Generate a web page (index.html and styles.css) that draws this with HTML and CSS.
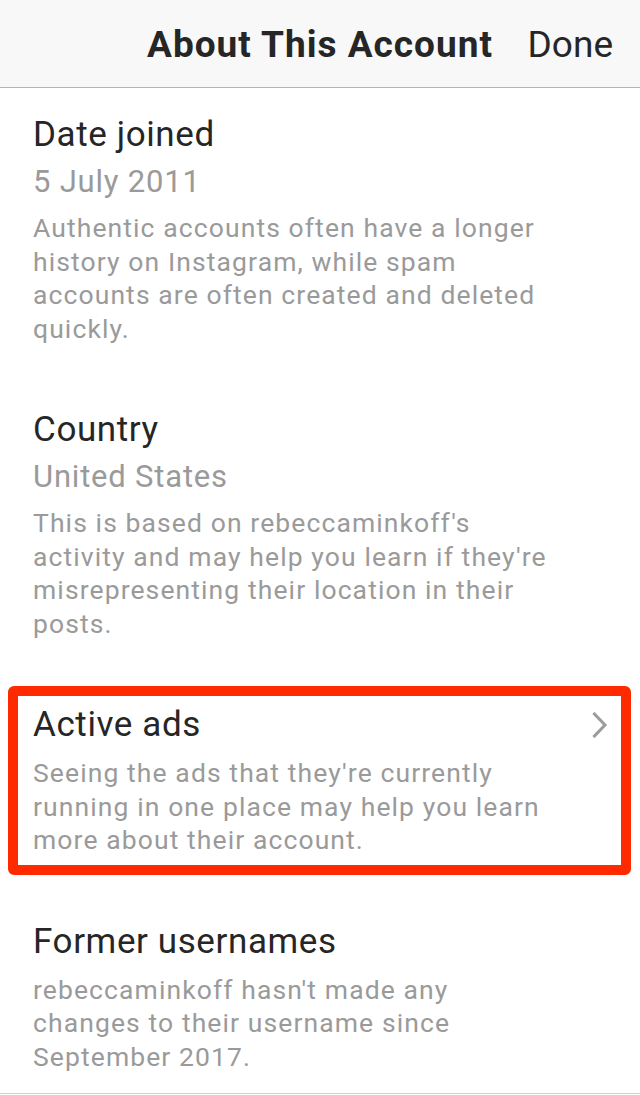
FILE: index.html
```html
<!DOCTYPE html>
<html lang="en">
<head>
<meta charset="utf-8">
<title>About This Account</title>
<link rel="stylesheet" href="styles.css">
</head>
<body>
<header class="nav">
  <span></span>
  <h1 class="nav-title">About This Account</h1>
  <span class="nav-done">Done</span>
</header>
<main class="list">
  <section class="item item-first">
    <div class="item-title">Date joined</div>
    <div class="item-value">5 July 2011</div>
    <p class="item-desc">Authentic accounts often have a longer<br>history on Instagram, while spam<br>accounts are often created and deleted<br>quickly.</p>
  </section>
  <section class="item item-country">
    <div class="item-title">Country</div>
    <div class="item-value">United States</div>
    <p class="item-desc">This is based on rebeccaminkoff's<br>activity and may help you learn if they're<br>misrepresenting their location in their<br>posts.</p>
  </section>
  <section class="item item-ads">
    <div class="item-head">
      <div class="item-title">Active ads</div>
      <svg class="chevron" width="16" height="26" viewBox="0 0 16 26" aria-hidden="true"><polyline points="2.5,2 13,13 2.5,24" fill="none" stroke="#9b9b9b" stroke-width="3" stroke-linecap="square"/></svg>
    </div>
    <p class="item-desc item-desc-tight">Seeing the ads that they're currently<br>running in one place may help you learn<br>more about their account.</p>
  </section>
  <section class="item item-former">
    <div class="item-title">Former usernames</div>
    <p class="item-desc item-desc-tight">rebeccaminkoff hasn't made any<br>changes to their username since<br>September 2017.</p>
  </section>
</main>
</body>
</html>
```
FILE: styles.css
```css
html, body {
  margin: 0;
  padding: 0;
  background: #ffffff;
}
body {
  font-family: Roboto, "Liberation Sans", sans-serif;
  width: 640px;
  height: 1095px;
  overflow: hidden;
}
.nav {
  height: 87px;
  background: #f8f8f8;
  border-bottom: 1px solid #b4b4b4;
  display: grid;
  grid-template-columns: 1fr auto 1fr;
  align-items: center;
  padding: 0 27px;
  box-sizing: content-box;
}
.nav-title {
  margin: 0;
  font-size: 37px;
  font-weight: 700;
  color: #262626;
  line-height: 48px;
  padding-top: 2px;
  letter-spacing: 1px;
}
.nav-done {
  justify-self: end;
  font-size: 37px;
  font-weight: 400;
  color: #262626;
  line-height: 48px;
  padding-top: 2px;
}
.list {
  display: flex;
  flex-direction: column;
  padding-top: 23px;
  border-bottom: 1px solid #d0d0d0;
  height: 1006px;
  box-sizing: border-box;
}
.item {
  padding: 0 20px 0 33px;
}
.item-country {
  margin-top: 61px;
}
.item-ads {
  margin: 46px 9px 0 8px;
  border: 10px solid #ff2a00;
  border-radius: 6px;
  padding: 5px 13px 8px 15px;
}
.item-former {
  margin-top: 43px;
}
.item-head {
  display: flex;
  align-items: center;
  justify-content: space-between;
}
.chevron {
  display: block;
}
.item-title {
  font-size: 35px;
  line-height: 48px;
  color: #262626;
  letter-spacing: 0.6px;
}
.item-value {
  font-size: 31px;
  line-height: 46px;
  color: #9a9a9a;
  letter-spacing: 0.8px;
}
.item-desc {
  margin: 6px 0 0;
  font-size: 26.5px;
  line-height: 33.5px;
  color: #9a9a9a;
  letter-spacing: 1.1px;
}
.item-desc-tight {
  margin-top: 7px;
}
```
